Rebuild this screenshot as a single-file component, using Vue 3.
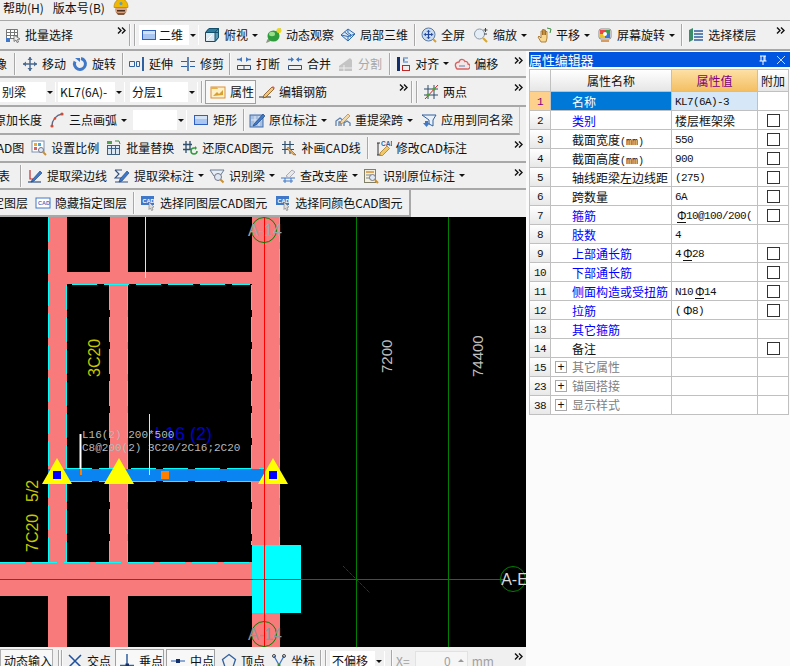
<template>
  <div class="page">
    <div class="menu">
      <span class="menu-item">帮助(H)</span>
      <span class="menu-item">版本号(B)</span>
      <svg class="helmet" viewBox="0 0 16 18" width="16" height="18">
        <ellipse cx="8" cy="11.5" rx="6" ry="5.5" fill="#d9a27c" />
        <path d="M4 12h8v1.5H4z" fill="#4a3020" />
        <path d="M3 14l2 3h6l2-3-2 1H5z" fill="#7a5a40" />
        <path d="M1 9.500C1 4 4 1 8 1s7 3 7 8.500z" fill="#f0b800" stroke="#a87800" stroke-width=".6" />
        <circle cx="8" cy="5.500" r="1.500" fill="#4aa0d8" />
      </svg>
    </div>

    <div class="row row-top">
      <ToolItem v-for="(it, i) in topRow" :key="i" :it="it" />
    </div>

    <div class="body">
      <div class="left">
        <div v-for="(r, ri) in leftRows" :key="ri" class="row" :class="r.cls">
          <ToolItem v-for="(it, i) in r.items" :key="i" :it="it" />
        </div>

        <svg class="canvas" viewBox="0 217 526 430" width="526" height="430">
          <rect x="0" y="217" width="526" height="430" fill="#000" />
          <g fill="#f87a7a">
            <rect x="48" y="217" width="19" height="430" />
            <rect x="110" y="217" width="18" height="430" />
            <rect x="252" y="217" width="28" height="430" />
            <rect x="48" y="272" width="232" height="12" />
            <rect x="0" y="562" width="252" height="34" />
          </g>
          <g stroke="#00ffff" fill="none" stroke-dasharray="25 7">
            <path d="M48.500 217V562M66.500 285V562M109.500 285V562M127.500 285V562M251.500 285V545M279.500 217V545" />
            <path d="M72 284.500H250M0 562.500H250" />
            <path d="M67 468.500H264M67 481.500H264" />
          </g>
          <rect x="48" y="469" width="216" height="12" fill="#0a84f0" />

          <path d="M356.500 217V647M448.500 217V647M280 579.500H505" stroke="#008000" fill="none" />
          <path d="M343 566L370 593" stroke="#008000" stroke-dasharray="1 1" fill="none" />

          <text x="155" y="440" font-size="18" fill="#0000c8" class="sans">L16 (2)</text>
          <text x="82" y="438" font-size="11" fill="#b8b8b8" class="mono">L16(2) 200*500</text>
          <text x="82" y="451" font-size="11" fill="#b8b8b8" class="mono">C8@200(2) 3C20/2C16;2C20</text>

          <path d="M80.500 434V469" stroke="#fff" stroke-width="2" />
          <rect x="80" y="469" width="2" height="6" fill="#ff8000" />
          <path d="M149.500 414V475M145.500 217V278" stroke="#ffff00" />

          <path d="M57 458L72 484H42zM119 458L134 484H104zM273 458L288 484H258z" fill="#ffff00" />
          <rect x="53" y="471" width="8" height="8" fill="#0000ff" />
          <rect x="269" y="471" width="8" height="8" fill="#0000ff" />
          <rect x="161" y="471" width="8" height="8" fill="#ff8000" />

          <rect x="252" y="545" width="49" height="68" fill="#00ffff" />
          <path d="M264.500 217V647M0 579.500H264" stroke="#ff0000" fill="none" />
          <path d="M264 579.500H301" stroke="#008000" />

          <g stroke="#008000" fill="none">
            <circle cx="264" cy="230" r="12.500" />
            <circle cx="264" cy="634" r="12.500" />
            <circle cx="513" cy="579" r="12.500" />
          </g>
          <g font-size="16" text-anchor="middle" class="sans">
            <text x="265" y="236" fill="#9aa8a8">A-14</text>
            <text x="265" y="640" fill="#8f9898">A-14</text>
            <text x="514.500" y="585" fill="#d8d8d8">A-E</text>
          </g>

          <g class="sans" font-size="16" fill="#c8c800">
            <text transform="translate(100 377) rotate(-90)">3C20</text>
            <text transform="translate(38 552) rotate(-90)">7C20</text>
            <text transform="translate(38 502) rotate(-90)">5/2</text>
          </g>
          <g class="sans" font-size="15" fill="#c0c0c0">
            <text transform="translate(392 373) rotate(-90)">7200</text>
            <text transform="translate(483 377) rotate(-90)">74400</text>
          </g>
        </svg>

        <div class="row status">
          <ToolItem v-for="(it, i) in statusRow" :key="i" :it="it" />
        </div>
      </div>

      <div class="panel">
        <div class="title">
          <span>属性编辑器</span>
          <svg class="title-ic pin" viewBox="0 0 10 10" width="10" height="10">
            <path d="M2 1h6M3 1v5M7 1v5M1.500 6h7M5 6v4M6 1v5" stroke="#fff" fill="none" />
          </svg>
          <svg class="title-ic" viewBox="0 0 10 10" width="10" height="10">
            <path d="M1 1l8 8M9 1L1 9" stroke="#c8d8f8" fill="none" />
          </svg>
        </div>
        <div class="grid">
          <div class="tr head">
            <div class="td num"></div>
            <div class="td hname">属性名称</div>
            <div class="td hval">属性值</div>
            <div class="td hadd">附加</div>
          </div>
          <div v-for="(p, i) in props" :key="p.n" class="tr" :class="{ sel: i === 0 }">
            <div class="td num">{{ p.n }}</div>
            <div class="td name" :class="p.kind">
              <span v-if="p.kind === 'group'" class="plus">+</span>
              {{ p.name }}<span v-if="p.unit" class="unit">{{ p.unit }}</span>
            </div>
            <div class="td val" :class="{ cjk: p.cjk }">
              <template v-for="(seg, si) in split(p.val)" :key="si">
                <span v-if="si > 0" class="bar" :class="{ rib: p.rib }">Φ</span>{{ seg }}
              </template>
            </div>
            <div class="td add"><span v-if="p.check" class="box"></span></div>
          </div>
        </div>
      </div>
    </div>
  </div>
</template>

<script setup>
import { h } from 'vue'

const icons = {
  batch: '<path d="M1.500 2.500h11v9h-11zM1.500 5.500h11M1.500 8.500h11M5.500 2.500v9M9.500 2.500v9" fill="#fff" stroke="#777"/><rect x="1" y="11" width="4" height="4" fill="#3f78c8"/><path d="M9 8l6 4-2.500.5 1 2.500-1.500.5-1-2.500-2 1.500z" fill="#eee" stroke="#555" stroke-width=".7"/>',
  plane: '<rect x="1.500" y="3.500" width="13" height="9" fill="#a9c6f2" stroke="#2f5fc0"/><rect x="2" y="4" width="12" height="3" fill="#d4e2f8"/>',
  cube: '<path d="M1.500 5.500L5 1.500h9.500v9l-3.500 4h-9.500z" fill="#dbeaf2" stroke="#14506c"/><path d="M1.500 5.500L5 1.500h9.500L11 5.500z" fill="#2f7c9c" stroke="#14506c"/><path d="M11 5.500h3.500v-4M11 5.500v9l3.500-4v-9z" fill="#5a9cb8" stroke="#14506c"/><path d="M3 13l5-5" stroke="#fff"/>',
  orbit: '<path d="M0 16c1-4 4-8 9-11l6-4-2 5c-2 4-7 8-13 10z" fill="#8a9a80"/><ellipse cx="7.500" cy="9" rx="6" ry="5.500" fill="#2f9c3c"/><ellipse cx="6" cy="7" rx="3" ry="2.200" fill="#9ade8a"/><circle cx="13" cy="3.500" r="2.500" fill="#e8d820"/>',
  local: '<path d="M1 8l7-6 7 5-7 7z" fill="#d8e8f8" stroke="#2f6cb0"/><path d="M4.500 5l7 5.500M8 2.500l-.2 3 3.400 2.500M1 8l7 1.500V14M8 9.500L15 7" stroke="#2f6cb0" fill="none"/>',
  full: '<circle cx="7.500" cy="7.500" r="6.500" fill="#c9dcf2" stroke="#5a7aa0"/><path d="M7.500 3.500v8M3.500 7.500h8" stroke="#24459c" stroke-width="1.200"/><path d="M6 4.800l1.500-1.500L9 4.800M6 10.200l1.500 1.500L9 10.200M4.800 6L3.300 7.500 4.800 9M10.200 6l1.500 1.500L10.200 9" fill="none" stroke="#24459c"/><path d="M12 12l3 3" stroke="#d8a030" stroke-width="2"/>',
  zoom: '<circle cx="6.500" cy="7" r="5" fill="#e4edf6" stroke="#8a9aa8"/><path d="M10 11l4 4" stroke="#d8a830" stroke-width="2.200"/><path d="M12.500 1v4M10.500 3h4M11 7h3" stroke="#444"/>',
  pan: '<path d="M5 15l-3-5 1-1 2 2V4h1.500v4V2.500H8V8V3h1.500v5V4.500H11V11l-1 4z" fill="#f8d890" stroke="#a06820" stroke-width=".8"/><path d="M11 1l4 1-1 4" fill="none" stroke="#3c8c40"/>',
  spin: '<rect x="2" y="2" width="12" height="10" rx="2" fill="#fff" stroke="#888"/><path d="M3 3h5v4H3z" fill="#e84848"/><path d="M8 3h5v4H8z" fill="#3c9c48"/><path d="M3 7h5v4H3z" fill="#e8c030"/><path d="M8 7h5v4H8z" fill="#3a78d8"/><circle cx="8" cy="7" r="2" fill="#fff"/><path d="M4 14h8" stroke="#d08030" stroke-width="1.500"/>',
  floor: '<path d="M1 3l4-2v12l-4 2z" fill="#3c8c68"/><path d="M6 4h9M6 7h9M6 10h9M6 13h9" stroke="#2f60a0" stroke-width="1.300"/>',
  move: '<path d="M8 1v14M1 8h14" stroke="#4a6a90" stroke-width="1.500"/><path d="M8 1L5.500 4h5zM8 15l-2.500-3h5zM1 8l3-2.500v5zM15 8l-3-2.500v5z" fill="#4a6a90"/>',
  turn: '<path d="M9 2.500a5.500 5.500 0 1 1-6 3" fill="none" stroke="#3f78c8" stroke-width="3"/><path d="M3 2h5v4z" fill="#3f78c8"/>',
  extend: '<path d="M.500 5.500h5v5h-5zM7.500 5.500h3v5h-3z" fill="none" stroke="#2f60a0"/><path d="M14 1v14" stroke="#2f60a0" stroke-width="2"/>',
  trim: '<path d="M1 5.500h6M1 10.500h6M10 5.500h5M10 10.500h5" stroke="#2f60a0"/><path d="M8 1v14" stroke="#2f60a0" stroke-width="1.500"/>',
  cut: '<path d="M1 3.500h5M10 3.500h5" stroke="#3f78c8" stroke-width="1.500"/><path d="M6 1v5L3 3.500zM10 1v5l3-2.500z" fill="#3f78c8"/><path d="M1.500 9.500h13v4h-13zM8 9.500v4" fill="none" stroke="#2f4f80"/>',
  merge: '<path d="M1 3.500h5M10 3.500h5" stroke="#3f78c8" stroke-width="1.500"/><path d="M7 3.500L4 1v5zM9 3.500L12 1v5z" fill="#3f78c8"/><path d="M1.500 9.500h13v4h-13z" fill="none" stroke="#2f4f80"/>',
  split: '<path d="M1 10l11-8 2 2v11H1z" fill="#c4c4c4"/><path d="M1 12h14M6 9v6" stroke="#eee"/>',
  align: '<rect x="2" y="1" width="3" height="14" fill="#14306c"/><rect x="7.500" y="9.500" width="7" height="5" fill="none" stroke="#c02828"/><path d="M8 2h5M8 6h5" stroke="#3f78c8"/><path d="M10 4l-2-2v4z" fill="#3f78c8"/>',
  offset: '<path d="M3 13h10a2.500 2.500 0 0 0 1-5c0-2-2-3-3-2.500C10 3 6 2 5 6 2 6 1 8 1.500 10 2 12 3 13 3 13z" fill="#f0e8e8" stroke="#d86060" stroke-width="1.300"/><path d="M5 10h6" stroke="#6080b0"/>',
  attrs: '<rect x="1" y="3" width="14" height="11" fill="#fff0c8" stroke="#d89038"/><path d="M1 3h6l1 2H1z" fill="#e8b048"/><path d="M3 12l4-4 2 2 4-4v5z" fill="#d8a030"/>',
  edit: '<path d="M0 13h12" stroke="#333"/><path d="M5 11L13 3l2 2-8 8-3 1z" fill="#f0c878" stroke="#805020" stroke-width=".8"/><path d="M13 3l2 2 1-1-2-2z" fill="#d86060"/>',
  two: '<path d="M1 5h14M1 11h14M5 1v14M11 1v14" stroke="#2f4f6c"/><path d="M2 15L15 1" stroke="#d82020"/><circle cx="5" cy="11" r="1.600" fill="#50a030"/><circle cx="11" cy="5" r="1.600" fill="#50a030"/>',
  arc: '<path d="M3 14C3 8 7 3 13 2" fill="none" stroke="#5a6a88" stroke-width="1.300"/><circle cx="3" cy="14" r="1.600" fill="#d84830"/><circle cx="13" cy="2" r="1.600" fill="#d84830"/><circle cx="6" cy="6.500" r="1.200" fill="#d84830"/>',
  box: '<rect x="1.500" y="3.500" width="13" height="9" fill="#a9c6f2" stroke="#2f5fc0"/><rect x="2" y="4" width="12" height="3" fill="#d4e2f8"/>',
  mark: '<rect x="1" y="3" width="13" height="12" fill="#a8c0e0" stroke="#3f6cb0"/><path d="M5 1h2M6 4v10M10 4v10M2 8h11" stroke="#e0e8f4"/><path d="M5 12L14 2l2 2-9 9-3 1z" fill="#3f78c8" stroke="#14407c" stroke-width=".6"/>',
  refetch: '<path d="M1 14V9l4-3 4 3v5M4 14v-4h2v4M9 14v-3l3-2 3 2v3" fill="none" stroke="#5a80b0" stroke-width="1.300"/><path d="M6 9l7-7 2 2-7 7-3 1z" fill="#f0d8a8" stroke="#b08040" stroke-width=".7"/>',
  apply: '<path d="M1 3h14l-3 5v6l-4-2V8z" fill="#e8f0fa" stroke="#2f60a0"/><path d="M4 9h3v2h2l-3.500 4L2 11h2z" fill="#3f78c8"/>',
  scale: '<rect x="1" y="1" width="12" height="11" fill="#fff" stroke="#7a90b0"/><rect x="3" y="3" width="3" height="3" fill="#e8a840"/><rect x="7" y="3" width="3" height="3" fill="#50a8d8"/><rect x="3" y="7" width="3" height="3" fill="#d86060"/><circle cx="10" cy="10" r="2.500" fill="#dde8f4" stroke="#778"/><path d="M12 12l3 3" stroke="#c89030" stroke-width="1.800"/>',
  swap: '<rect x="1" y="1" width="5" height="3" fill="#50a050"/><rect x="1.500" y="5.500" width="12" height="9" fill="#dce6f0" stroke="#3f5f80"/><path d="M1.500 8.500h12M5.500 5.500v9M9.500 5.500v9" stroke="#3f5f80"/><path d="M9 1h4l1 3" fill="none" stroke="#3c8c40"/>',
  restore: '<path d="M1 4.500h9M1 9.500h8M4 1v12M8 1v9" stroke="#2f4f6c" stroke-width="1.300"/><path d="M15 11a3 3 0 1 1-3-3h2" fill="none" stroke="#2f9c3c" stroke-width="1.500"/><path d="M13 6l2 2-2 2z" fill="#2f9c3c"/>',
  drawcad: '<path d="M1 4.500h12M1 9.500h12M4 1v13M9 1v13" stroke="#2f4f6c" stroke-width="1.200"/><path d="M7 7l6 6 2 2-3-.5-6-6z" fill="#e8b060" stroke="#805020" stroke-width=".6"/>',
  modcad: '<path d="M2 3v12M1 3h3M1 15h3" stroke="#333"/><path d="M4 13l7-7 2.500 2.500-7 7H4z" fill="#f0c868" stroke="#a07020" stroke-width=".7"/><text x="5" y="6" font-size="6.500" font-family="Liberation Sans" font-weight="700" fill="#2f60a0">CAD</text>',
  edgeline: '<path d="M1 14h13" stroke="#2f4f80" stroke-width="1.200"/><path d="M3 2v9h3" fill="none" stroke="#c03030" stroke-width="1.200"/><path d="M5 12l8-9 2 2-8 8-3 1z" fill="#3f78c8" stroke="#14407c" stroke-width=".6"/>',
  beammark: '<path d="M1 2h7M1 2l4 4-4 4h7" fill="none" stroke="#2f4f80" stroke-width="1.100"/><path d="M1 14h13" stroke="#2f4f80"/><path d="M6 11l7-8 2 2-7 8-3 1z" fill="#3f78c8" stroke="#14407c" stroke-width=".6"/>',
  recog: '<path d="M1 2h14l-4 6H5z" fill="#e8eef6" stroke="#6a7a90"/><circle cx="9" cy="9" r="3.500" fill="#dde8f4" stroke="#778"/><path d="M11.500 11.500l3 3" stroke="#c89030" stroke-width="2"/>',
  support: '<path d="M1 10h14M3 13h10M5 10v5M11 10v5" stroke="#3f78c8"/><path d="M6 8l6-6 3 2-6 6z" fill="#e8e8e8" stroke="#aab"/>',
  recogmark: '<rect x="1.500" y="1.500" width="11" height="13" fill="#f4f0dc" stroke="#80806a"/><path d="M3 4h8" stroke="#d89030" stroke-width="1.500"/><path d="M3 7h5M3 10h4" stroke="#789"/><circle cx="9.500" cy="9.500" r="3" fill="#dde8f4" stroke="#778"/><path d="M12 12l3 3" stroke="#c89030" stroke-width="2"/>',
  cadbox: '<rect x="1" y="3" width="14" height="10" fill="#fff" stroke="#3f78c8"/><text x="3" y="10" font-size="5.500" font-family="Liberation Sans" font-weight="700" fill="#3f78c8">CAD</text>',
  cadsel: '<rect x="1" y="1" width="13" height="9" fill="#3f78c8"/><text x="2.500" y="7.500" font-size="5.500" font-family="Liberation Sans" font-weight="700" fill="#fff">CAD</text><path d="M9 7l5 5-2 .5 1 2.500-1.500.5-1-2.500-1.500 1.500z" fill="#ddd" stroke="#777" stroke-width=".6"/>',
  cross: '<path d="M2 2l12 12M14 2L2 14" stroke="#1f50a0" stroke-width="1.500"/>',
  perp: '<path d="M8 1v11M1 12.500h14" stroke="#2f60a0" stroke-width="1.500"/><rect x="6.500" y="10.500" width="3.500" height="3.500" fill="#14306c"/>',
  mid: '<path d="M1 8h14" stroke="#6a90c8" stroke-width="1.500"/><rect x="6" y="6" width="4" height="4" fill="#14306c"/>',
  apex: '<path d="M8 1.500l6.500 5-2.500 7.500H4L1.500 6.500z" fill="none" stroke="#2f60a0" stroke-width="1.300"/>',
  coord: '<path d="M3 3l5 9 5-9" fill="none" stroke="#3f78c8" stroke-width="1.300"/><circle cx="3" cy="3" r="1.500" fill="none" stroke="#444"/><circle cx="13" cy="3" r="1.500" fill="none" stroke="#444"/><circle cx="8" cy="12" r="1.500" fill="#3c8c40"/>'
}

// one toolbar entry, the kind decides how it is drawn
const ToolItem = (props) => {
  const it = props.it
  const style = it.ml !== undefined ? { marginLeft: it.ml + 'px' } : null
  if (it.t === 'sep') return h('span', { class: 'sep', style })
  if (it.t === 'more') {
    return h('svg', { class: ['more', it.ml === undefined && 'more-end'], style, viewBox: '0 0 9 7', width: 9, height: 7 }, [
      h('path', { d: 'M1 .5l3 3-3 3M5 .5l3 3-3 3', fill: 'none', stroke: '#111', 'stroke-width': 1.4 })
    ])
  }
  if (it.t === 'clip') return h('span', { class: 'label', style }, it.text)
  if (it.t === 'gray') return h('span', { class: 'label gray', style }, it.text)
  if (it.t === 'input') {
    return h('span', { class: 'num-input', style }, [
      h('span', { class: 'gray' }, '0'),
      h('span', { class: 'spin' })
    ])
  }
  if (it.t === 'combo') {
    return h('span', { class: 'combo', style: { ...style, width: it.w + 'px' } }, [
      it.icon ? h('svg', { class: 'ic', viewBox: '0 0 16 16', innerHTML: icons[it.icon] }) : null,
      h('span', { class: 'combo-text' }, it.text),
      h('span', { class: 'combo-arrow' })
    ])
  }
  if (it.t === 'tab') return h('span', { class: 'tab', style }, it.text)
  return h('span', { class: ['tool', it.on && 'on', it.off && 'off'], style }, [
    h('svg', { class: 'ic', viewBox: '0 0 16 16', innerHTML: icons[it.icon] }),
    h('span', { class: 'label' }, it.text),
    it.arrow ? h('span', { class: 'arrow' }) : null
  ])
}
ToolItem.props = ['it']

const sep = (ml) => ({ t: 'sep', ml })
const tool = (icon, text, ml, extra = {}) => ({ icon, text, ml, ...extra })
const drop = { arrow: true }

const topRow = [
  tool('batch', '批量选择', 5),
  { t: 'more', ml: 44 },
  sep(3), sep(3),
  { t: 'combo', icon: 'plane', text: '二维', w: 60, ml: 3 },
  tool('cube', '俯视', 5, drop),
  tool('orbit', '动态观察', 8),
  tool('local', '局部三维', 6),
  sep(6),
  tool('full', '全屏', 5),
  tool('zoom', '缩放', 8, drop),
  tool('pan', '平移', 9, drop),
  tool('spin', '屏幕旋转', 7, drop),
  sep(6),
  tool('floor', '选择楼层', 5),
  { t: 'more' }
]

const leftRows = [
  {
    cls: 'r2',
    items: [
      { t: 'clip', text: '像', ml: -5 },
      sep(7),
      tool('move', '移动', 6),
      tool('turn', '旋转', 6),
      sep(6),
      tool('extend', '延伸', 5),
      tool('trim', '修剪', 7),
      sep(5),
      tool('cut', '打断', 5),
      tool('merge', '合并', 7),
      tool('split', '分割', 7, { off: true }),
      sep(7),
      tool('align', '对齐', 4, drop),
      tool('offset', '偏移', 5),
      { t: 'more' }
    ]
  },
  {
    cls: 'r3',
    items: [
      { t: 'combo', text: '别梁', w: 56, ml: 0 },
      { t: 'combo', text: 'KL7(6A)-', w: 67, ml: 2 },
      { t: 'combo', text: '分层1', w: 68, ml: 5 },
      sep(3),
      tool('attrs', '属性', 2, { on: true }),
      tool('edit', '编辑钢筋', 3),
      { t: 'more', ml: 72 },
      sep(3), sep(3),
      tool('two', '两点', 5),
      { t: 'more' }
    ]
  },
  {
    cls: 'r4',
    items: [
      { t: 'clip', text: '原加长度', ml: -6 },
      tool('arc', '三点画弧', 7, drop),
      { t: 'combo', text: '', w: 54, ml: 6 },
      tool('box', '矩形', 6),
      sep(6),
      tool('mark', '原位标注', 4, drop),
      tool('refetch', '重提梁跨', 8, drop),
      tool('apply', '应用到同名梁', 8)
    ]
  },
  {
    cls: 'r5',
    items: [
      { t: 'clip', text: 'CAD图', ml: -11 },
      tool('scale', '设置比例', 7),
      tool('swap', '批量替换', 7),
      tool('restore', '还原CAD图元', 8),
      tool('drawcad', '补画CAD线', 8),
      sep(6),
      tool('modcad', '修改CAD标注', 7),
      { t: 'more' }
    ]
  },
  {
    cls: 'r6',
    items: [
      { t: 'clip', text: '表', ml: -2 },
      sep(10),
      tool('edgeline', '提取梁边线', 5),
      tool('beammark', '提取梁标注', 7, drop),
      tool('recog', '识别梁', 5, drop),
      tool('support', '查改支座', 5, drop),
      tool('recogmark', '识别原位标注', 5, drop),
      { t: 'more' }
    ]
  },
  {
    cls: 'r7',
    items: [
      { t: 'clip', text: '定图层', ml: -8 },
      tool('cadbox', '隐藏指定图层', 7),
      sep(6),
      tool('cadsel', '选择同图层CAD图元', 5),
      tool('cadsel', '选择同颜色CAD图元', 8)
    ]
  }
]

const statusRow = [
  { t: 'tab', text: '动态输入', ml: 0 },
  sep(5), sep(1),
  tool('cross', '交点', 4),
  tool('perp', '垂点', 4, { on: true }),
  tool('mid', '中点', 2, { on: true }),
  tool('apex', '顶点', 6),
  tool('coord', '坐标', 6),
  sep(5), sep(3),
  { t: 'combo', text: '不偏移', w: 55, ml: 3 },
  sep(6),
  { t: 'gray', text: 'X=', ml: 3 },
  { t: 'input', ml: 5 },
  { t: 'gray', text: 'mm', ml: 4 },
  { t: 'more' }
]

const props = [
  { n: 1, name: '名称', val: 'KL7(6A)-3' },
  { n: 2, name: '类别', kind: 'blue', val: '楼层框架梁', cjk: true, check: true },
  { n: 3, name: '截面宽度', unit: '(mm)', val: '550', check: true },
  { n: 4, name: '截面高度', unit: '(mm)', val: '900', check: true },
  { n: 5, name: '轴线距梁左边线距', val: '(275)', check: true },
  { n: 6, name: '跨数量', val: '6A', check: true },
  { n: 7, name: '箍筋', kind: 'blue', val: 'Φ10@100/200(', rib: true, check: true },
  { n: 8, name: '肢数', kind: 'blue', val: '4' },
  { n: 9, name: '上部通长筋', kind: 'blue', val: '4Φ28', rib: true, check: true },
  { n: 10, name: '下部通长筋', kind: 'blue', val: '', check: true },
  { n: 11, name: '侧面构造或受扭筋', kind: 'blue', val: 'N10Φ14', rib: true, check: true },
  { n: 12, name: '拉筋', kind: 'blue', val: '(Φ8)', check: true },
  { n: 13, name: '其它箍筋', kind: 'blue', val: '' },
  { n: 14, name: '备注', val: '', check: true },
  { n: 15, name: '其它属性', kind: 'group', val: '' },
  { n: 23, name: '锚固搭接', kind: 'group', val: '' },
  { n: 38, name: '显示样式', kind: 'group', val: '' }
]

const split = (v) => v.split('Φ')
</script>

<style>
html,
body {
  margin: 0;
  background: #f0f0f0;
}

/* toolbar entries come from a render function, scoped rules do not reach inside them */
.tool {
  display: flex;
  align-items: center;
  flex: none;
  gap: 4px;
}
.tool.on {
  box-sizing: border-box;
  height: 24px;
  padding: 0 1px 0 4px;
  border: 1px solid #a0a0a0;
  background: #f8f8f8;
}
.status .tool.on {
  padding: 0 0 0 3px;
}
.tool.off {
  color: #a8a8a8;
}
.ic {
  width: 16px;
  height: 16px;
  flex: none;
}
.label {
  flex: none;
}
.gray {
  color: #a0a0a0;
}
.arrow {
  width: 0;
  height: 0;
  border: 3px solid transparent;
  border-top: 3px solid #111;
  border-bottom: 0;
}
.sep {
  flex: none;
  width: 1px;
  height: 22px;
  background: #a8a8a8;
  border-right: 1px solid #fafafa;
}
.more {
  flex: none;
  align-self: flex-start;
  margin-top: 6px;
}
.more-end {
  margin-left: auto;
  margin-right: 3px;
}
.row-top .more-end {
  margin-right: 5px;
}
.combo {
  display: flex;
  align-items: center;
  flex: none;
  box-sizing: border-box;
  height: 20px;
  padding-left: 2px;
  gap: 2px;
  background: #fff;
}
.combo-text {
  flex: 1;
  overflow: hidden;
}
.combo-arrow {
  position: relative;
  flex: none;
  width: 9px;
  height: 20px;
  margin-right: 1px;
  background: #f0f0f0;
}
.combo-arrow::after {
  content: "";
  position: absolute;
  left: 1px;
  top: 9px;
  border: 3.5px solid transparent;
  border-top: 3.5px solid #111;
  border-bottom: 0;
}
.tab {
  flex: none;
  box-sizing: border-box;
  width: 53px;
  height: 24px;
  padding: 3px 0 0 3px;
  border: 1px solid #b0b0b0;
  background: #f8f8f8;
}
.num-input {
  display: flex;
  align-items: center;
  justify-content: flex-end;
  flex: none;
  box-sizing: border-box;
  width: 53px;
  height: 20px;
  gap: 7px;
  padding-right: 3px;
  background: #f6f6f6;
  border: 1px solid #e2e2e2;
}
.spin {
  width: 0;
  height: 0;
  border: 3px solid transparent;
  border-bottom: 3px solid #999;
  border-top: 0;
}
</style>

<style scoped>
.page {
  width: 790px;
  height: 666px;
  overflow: hidden;
  background: #f0f0f0;
  color: #111;
  font: 12px/16px "Noto Sans CJK SC", "Liberation Sans", sans-serif;
}
.menu {
  display: flex;
  align-items: flex-start;
  height: 20px;
  padding-left: 3px;
}
.menu-item {
  margin-right: 9px;
}
.menu-item:nth-child(2) {
  margin-right: 8px;
}
.helmet {
  margin-top: -2px;
}
.row {
  display: flex;
  align-items: center;
  box-sizing: border-box;
  white-space: nowrap;
  overflow: hidden;
  border-bottom: 2px solid #a8a8a8;
}
.row-top {
  height: 31px;
  border-top: 1px solid #a8a8a8;
}
.body {
  display: flex;
  height: 615px;
}
.left {
  width: 526px;
  flex: none;
}
.r2 {
  height: 27px;
}
.r3 {
  height: 29px;
}
.r4 {
  height: 28px;
  width: 520px;
  border-right: 1px solid #c4c4c4;
}
.r5 {
  height: 28px;
}
.r6 {
  height: 27px;
}
.r7 {
  height: 27px;
  width: 411px;
  border-right: 2px solid #a8a8a8;
}
.canvas {
  display: block;
}
.sans {
  font-family: "Liberation Sans", sans-serif;
}
.mono {
  font-family: "Liberation Mono", monospace;
}
.status {
  height: 27px;
  flex: none;
  border: 0;
}

.panel {
  flex: 1;
  padding-top: 1px;
  padding-left: 3px;
  background: #fbfbfb;
}
.title {
  display: flex;
  align-items: center;
  height: 15px;
  background: #0055e0;
  color: #fff;
  font-size: 13px;
  letter-spacing: -0.1px;
}
.title-ic {
  margin-left: 8px;
}
.pin {
  margin-left: auto;
}
.title-ic:last-child {
  margin-right: 4px;
}
.grid {
  margin: 2px 1px 0 0;
  border-left: 1px solid #c0c0c0;
  border-top: 1px solid #c0c0c0;
}
.tr {
  display: grid;
  grid-template-columns: 21px 121px 86px 31px;
  height: 19px;
  box-sizing: border-box;
}
.tr.head {
  height: 22px;
}
.td {
  box-sizing: border-box;
  overflow: hidden;
  white-space: nowrap;
  line-height: 20px;
  background: #fff;
  border-right: 1px solid #c0c0c0;
  border-bottom: 1px solid #c0c0c0;
}
.num {
  text-align: center;
  background: linear-gradient(#ffffff, #e8e8e8);
  font: 11px/20px "Liberation Mono", monospace;
  letter-spacing: -0.6px;
}
.head .td {
  line-height: 22px;
  text-align: center;
  background: linear-gradient(#ffffff, #e6e6e6);
}
.head .hval {
  color: #800080;
  background: linear-gradient(#fde0a4, #f4bf62);
}
.name {
  padding-left: 21px;
}
.name.blue {
  color: #0000ff;
}
.name.group {
  display: flex;
  align-items: center;
  gap: 5px;
  padding-left: 4px;
  color: #808080;
}
.unit {
  font: 10px "Liberation Mono", monospace;
}
.plus {
  box-sizing: border-box;
  flex: none;
  width: 12px;
  height: 12px;
  border: 1px solid #aaa;
  color: #111;
  font: 12px/10px "Liberation Sans", sans-serif;
  text-align: center;
}
.val {
  padding-left: 3px;
  white-space: pre;
  font: 11px/20px "Liberation Mono", monospace;
  letter-spacing: -0.6px;
}
.val.cjk {
  font: 12px/20px "Noto Sans CJK SC", sans-serif;
  letter-spacing: 0;
}
.bar {
  display: inline-block;
  width: 9px;
  margin-left: 2px;
  letter-spacing: 0;
  text-align: center;
  font: 12px/11px "Liberation Sans", sans-serif;
  vertical-align: -1px;
}
.bar.rib {
  border-bottom: 1px solid #111;
}
.add {
  display: flex;
  align-items: center;
  justify-content: center;
}
.box {
  box-sizing: border-box;
  width: 13px;
  height: 13px;
  border: 1px solid #333;
  background: #fff;
}
.sel .num {
  color: #800080;
  background: #fdd08c;
}
.sel .name {
  color: #fff;
  background: #0078d7;
}
.sel .val {
  background: #d6e8f8;
}
</style>
